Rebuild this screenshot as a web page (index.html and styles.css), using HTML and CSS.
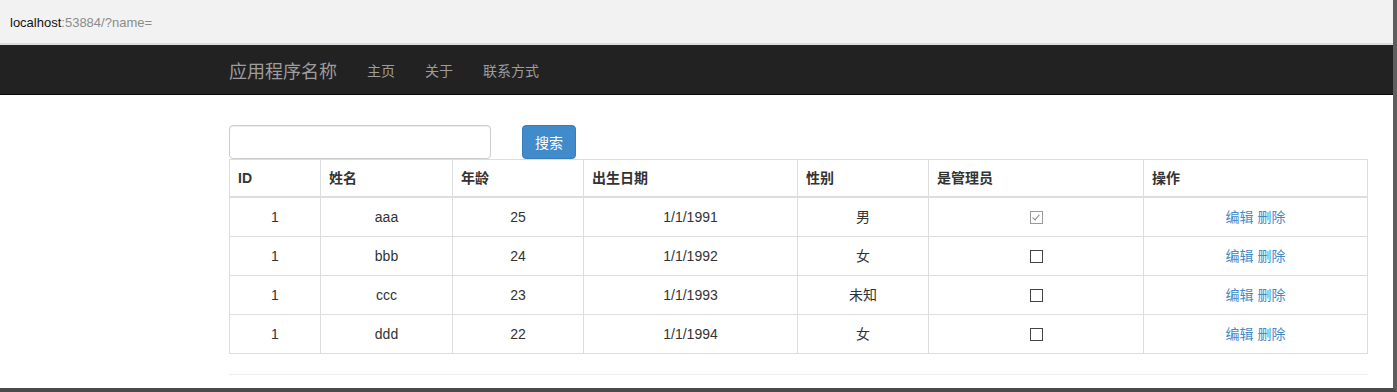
FILE: index.html
```html
<!DOCTYPE html>
<html>
<head>
    <meta charset="utf-8">
    <link rel="stylesheet" href="styles.css">
    <title>用户列表</title>
</head>
<body>
<div class="window">
    <div class="address-bar">
        <span class="host">localhost</span><span class="path">:53884/?name=</span>
    </div>
    <div class="navbar">
        <div class="container nav-inner">
            <a class="brand" href="#">应用程序名称</a>
            <a class="nav-link" href="#">主页</a>
            <a class="nav-link" href="#">关于</a>
            <a class="nav-link" href="#">联系方式</a>
        </div>
    </div>
    <div class="container content">
        <form class="search">
            <input type="text" class="search-input" name="name">
            <button type="button" class="btn">搜索</button>
        </form>
        <table class="grid">
            <thead>
                <tr>
                    <th class="c-id">ID</th>
                    <th class="c-name">姓名</th>
                    <th class="c-age">年龄</th>
                    <th class="c-date">出生日期</th>
                    <th class="c-sex">性别</th>
                    <th class="c-admin">是管理员</th>
                    <th>操作</th>
                </tr>
            </thead>
            <tbody>
                <tr>
                    <td>1</td><td>aaa</td><td>25</td><td>1/1/1991</td><td>男</td>
                    <td><span class="check checked"></span></td>
                    <td><a href="#">编辑</a> <a href="#">删除</a></td>
                </tr>
                <tr>
                    <td>1</td><td>bbb</td><td>24</td><td>1/1/1992</td><td>女</td>
                    <td><span class="check"></span></td>
                    <td><a href="#">编辑</a> <a href="#">删除</a></td>
                </tr>
                <tr>
                    <td>1</td><td>ccc</td><td>23</td><td>1/1/1993</td><td>未知</td>
                    <td><span class="check"></span></td>
                    <td><a href="#">编辑</a> <a href="#">删除</a></td>
                </tr>
                <tr>
                    <td>1</td><td>ddd</td><td>22</td><td>1/1/1994</td><td>女</td>
                    <td><span class="check"></span></td>
                    <td><a href="#">编辑</a> <a href="#">删除</a></td>
                </tr>
            </tbody>
        </table>
        <hr>
    </div>
</div>
</body>
</html>
```

FILE: styles.css
```css
html, body {
    margin: 0;
    padding: 0;
    background: #fff;
}
body {
    font-family: "Liberation Sans", "Noto Sans CJK SC", sans-serif;
    font-size: 14px;
    color: #333;
}
.window {
    width: 1393px;
    height: 388px;
    overflow: hidden;
    border-right: 4px solid #5e5e5e;
    border-bottom: 4px solid #4a4a4a;
    background: #fff;
}
.address-bar {
    height: 43px;
    line-height: 46px;
    padding-left: 10px;
    background: #f2f2f2;
    border-bottom: 2px solid #dcdcdc;
    font-size: 13px;
}
.host {
    color: #111;
}
.path {
    color: #8c8c8c;
}
.container {
    margin-left: 229px;
    width: 1139px;
}
.navbar {
    height: 49px;
    background: #222;
    border-bottom: 1px solid #080808;
}
.nav-inner {
    display: flex;
    align-items: center;
    height: 49px;
}
.navbar a {
    text-decoration: none;
    color: #9d9d9d;
}
.brand {
    font-size: 18px;
    padding-right: 15px;
    color: #a8a8a8;
}
.nav-link {
    padding: 0 15px;
    font-size: 14px;
}
.content {
    padding-top: 30px;
}
.search {
    display: flex;
    align-items: center;
    gap: 31px;
    margin: 0;
}
.search-input {
    box-sizing: border-box;
    width: 262px;
    height: 34px;
    border: 1px solid #ccc;
    border-radius: 4px;
    box-shadow: inset 0 1px 1px rgba(0, 0, 0, 0.075);
    padding: 6px 12px;
    margin: 0;
}
.btn {
    box-sizing: border-box;
    height: 34px;
    padding: 0 12px;
    background: #428bca;
    border: 1px solid #357ebd;
    border-radius: 4px;
    color: #fff;
    font-family: inherit;
    font-size: 14px;
}
.grid {
    width: 100%;
    border-collapse: collapse;
    border: 1px solid #ddd;
}
.grid th {
    text-align: left;
    font-weight: bold;
    padding: 8px;
    line-height: 20px;
    border: 1px solid #ddd;
    border-bottom: 2px solid #ddd;
}
.grid td {
    text-align: center;
    padding: 8px;
    line-height: 22px;
    border: 1px solid #ddd;
}
.c-id { width: 74px; }
.c-name { width: 115px; }
.c-age { width: 114px; }
.c-date { width: 197px; }
.c-sex { width: 114px; }
.c-admin { width: 198px; }
.grid a {
    color: #428bca;
    text-decoration: none;
}
.check {
    display: inline-block;
    box-sizing: border-box;
    width: 13px;
    height: 13px;
    border: 1px solid #444;
    vertical-align: -2px;
    position: relative;
}
.check.checked {
    border-color: #9a9a9a;
}
.check.checked::after {
    content: "";
    position: absolute;
    left: 3px;
    top: 1px;
    width: 3px;
    height: 6px;
    border-right: 1px solid #888;
    border-bottom: 1px solid #888;
    transform: rotate(40deg);
}
hr {
    margin: 20px 0 0;
    border: 0;
    border-top: 1px solid #eee;
}
```
